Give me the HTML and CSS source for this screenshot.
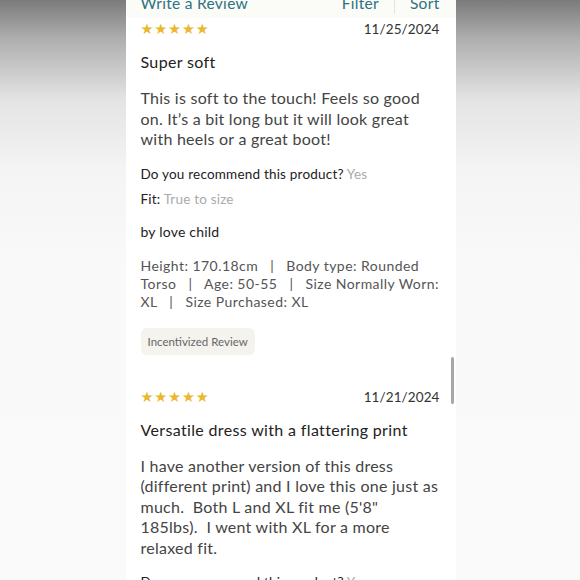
FILE: index.html
```html
<!DOCTYPE html>
<html>
<head>
<meta charset="utf-8">
<link rel="stylesheet" href="styles.css">
</head>
<body>
<div class="page">
  <div class="column">
    <div class="header">
      <span class="write">Write a Review</span>
      <div class="tools">
        <span class="tool">Filter</span>
        <span class="sep"></span>
        <span class="tool">Sort</span>
      </div>
    </div>
    <div class="review">
      <div class="top">
        <span class="stars">★★★★★</span>
        <span class="date">11/25/2024</span>
      </div>
      <div class="title">Super soft</div>
      <p class="body">This is soft to the touch! Feels so good on. It’s a bit long but it will look great with heels or a great boot!</p>
      <div class="qa">Do you recommend this product? <span class="ans">Yes</span></div>
      <div class="qa fit">Fit: <span class="ans">True to size</span></div>
      <div class="author">by love child</div>
      <p class="details">Height: 170.18cm &nbsp; | &nbsp; Body type: Rounded Torso &nbsp; | &nbsp; Age: 50-55 &nbsp; | &nbsp; Size Normally Worn: XL &nbsp; | &nbsp; Size Purchased: XL</p>
      <span class="badge">Incentivized Review</span>
    </div>
    <div class="review second">
      <div class="top">
        <span class="stars">★★★★★</span>
        <span class="date">11/21/2024</span>
      </div>
      <div class="title">Versatile dress with a flattering print</div>
      <p class="body">I have another version of this dress (different print) and I love this one just as much.&nbsp; Both L and XL fit me (5'8" 185lbs).&nbsp; I went with XL for a more relaxed fit.</p>
      <div class="qa">Do you recommend this product? <span class="ans">Yes</span></div>
    </div>
    <div class="scrollbar"></div>
  </div>
</div>
</body>
</html>
```
FILE: styles.css
```css
html, body {
  margin: 0;
  padding: 0;
  height: 580px;
  overflow: hidden;
}
body {
  background: linear-gradient(to bottom, #7b7b7b 0px, #b0b0b0 40px, #e4e4e4 100px, #f4f4f4 170px, #f9f9f9 260px, #fafafa 580px);
  font-family: Lato, "Open Sans", sans-serif;
}
.page {
  display: flex;
  justify-content: center;
}
.column {
  width: 330px;
  margin-left: 1px;
  height: 600px;
  background: #fff;
  position: relative;
  margin-top: -12px;
}
.header {
  background: #fbfbf7;
  height: 30px;
  padding: 0 16px 0 15px;
  display: flex;
  align-items: center;
  justify-content: space-between;
  color: #2d7282;
  font-size: 15.5px;
  letter-spacing: 0.3px;
}
.tools {
  display: flex;
  align-items: center;
}
.sep {
  width: 1px;
  height: 22px;
  background: #e4e4e0;
  margin: 0 15px;
}
.review {
  padding: 0 16px 0 15px;
}
.top {
  display: flex;
  justify-content: space-between;
  align-items: center;
  height: 22px;
  margin-top: 0;
}
.stars {
  color: #e9b82c;
  font-size: 14.5px;
  letter-spacing: 0.8px;
  font-family: "DejaVu Sans", sans-serif;
}
.date {
  color: #333;
  font-size: 13.5px;
  letter-spacing: 0.1px;
}
.title {
  color: #222;
  font-size: 16px;
  letter-spacing: 0.35px;
  margin-top: 12px;
  line-height: 20px;
}
.body {
  color: #444;
  font-size: 16px;
  letter-spacing: 0.25px;
  line-height: 20.5px;
  margin: 16px 0 0;
}
.qa {
  color: #222;
  font-size: 13.5px;
  letter-spacing: 0.2px;
  margin-top: 15px;
  line-height: 18px;
}
.second .qa {
  margin-top: 15px;
}
.qa.fit {
  margin-top: 7px;
}
.ans {
  color: #aaa;
}
.author {
  color: #222;
  font-size: 14px;
  letter-spacing: 0.2px;
  margin-top: 15px;
  line-height: 18px;
}
.details {
  color: #555;
  font-size: 14px;
  letter-spacing: 0.45px;
  line-height: 18px;
  margin: 16px 0 0;
}
.badge {
  display: inline-block;
  margin-top: 17px;
  background: #f5f3ee;
  color: #666;
  font-size: 11.5px;
  border-radius: 6px;
  padding: 7px 7px;
  line-height: 13px;
}
.second {
  margin-top: 31px;
}
.scrollbar {
  position: absolute;
  right: 2px;
  top: 369px;
  width: 3px;
  height: 47px;
  background: #a8a8a8;
  border-radius: 2px;
}
```
